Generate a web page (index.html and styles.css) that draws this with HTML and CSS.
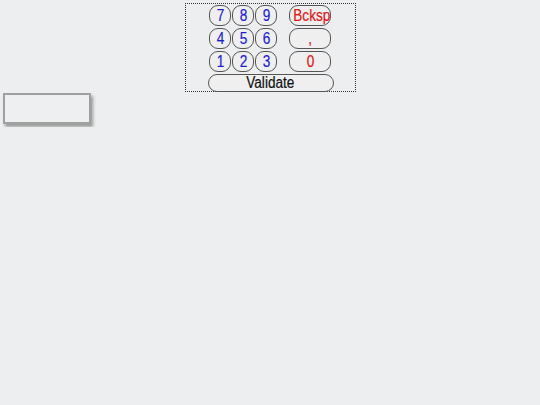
FILE: index.html
```html
<!DOCTYPE html>
<html lang="en">
<head>
    <meta charset="UTF-8">
    <meta name="viewport" content="width=device-width, initial-scale=1.0">
    <title>Keypad</title>
    <link rel="stylesheet" href="styles.css">
</head>
<body>
    <div id="keypad">
        <div class="keys">
            <button class="key digit"><span>7</span></button>
            <button class="key digit"><span>8</span></button>
            <button class="key digit"><span>9</span></button>
            <span></span>
            <button class="key action"><span>Bcksp</span></button>

            <button class="key digit"><span>4</span></button>
            <button class="key digit"><span>5</span></button>
            <button class="key digit"><span>6</span></button>
            <span></span>
            <button class="key action"><span>,</span></button>

            <button class="key digit"><span>1</span></button>
            <button class="key digit"><span>2</span></button>
            <button class="key digit"><span>3</span></button>
            <span></span>
            <button class="key action"><span>0</span></button>
        </div>
        <button class="key validate"><span>Validate</span></button>
    </div>

    <div class="display"></div>
</body>
</html>
```

FILE: styles.css
```css
body {
    margin: 0;
    padding: 3px;
    background-color: #edeef0;
    font-family: "Liberation Sans", Arial, sans-serif;
}

#keypad {
    width: 169px;
    height: 87px;
    margin: 0 auto;
    border: 1px dotted #333;
    display: flex;
    flex-direction: column;
    align-items: center;
}

.keys {
    display: grid;
    grid-template-columns: 22px 22px 22px 10px 42px;
    grid-auto-rows: 21px;
    column-gap: 1px;
    row-gap: 2px;
    margin-top: 1px;
}

.key {
    margin: 0;
    padding: 0;
    font-family: inherit;
    font-size: 16px;
    line-height: 1;
    background-color: #efefef;
    border: 1px solid #555;
    border-radius: 9px;
    color: #111;
    white-space: nowrap;
    -webkit-text-stroke: 0.2px currentColor;
}

/* the keypad font is drawn condensed */
.key span {
    display: inline-block;
    transform: scaleX(0.85);
}

.digit {
    color: #1e1ecf;
}

.action {
    color: #e01818;
}

.validate {
    width: 126px;
    height: 18px;
    margin-top: 2px;
    margin-left: 1px;
}

.display {
    width: 84px;
    height: 27px;
    margin-top: 1px;
    border: 2px solid #a0a0a0;
    background-color: #eeeff1;
    box-shadow: 2px 3px 3px #9a9a9a;
}
```
